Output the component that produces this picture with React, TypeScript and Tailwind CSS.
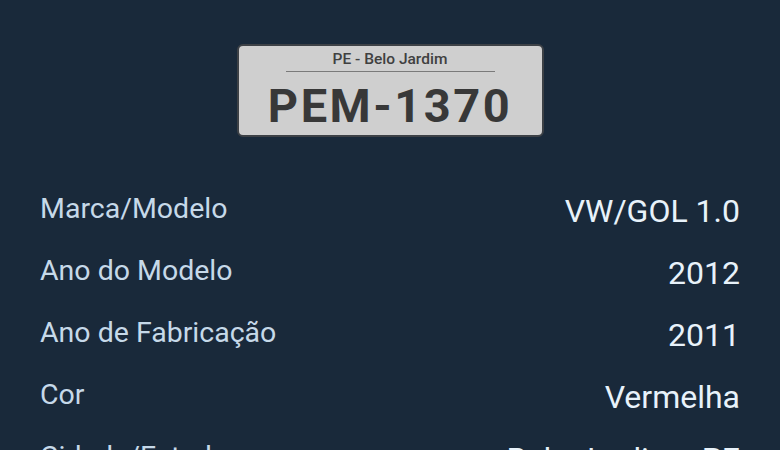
const rows: [string, string][] = [
  ["Marca/Modelo", "VW/GOL 1.0"],
  ["Ano do Modelo", "2012"],
  ["Ano de Fabricação", "2011"],
  ["Cor", "Vermelha"],
  ["Cidade/Estado", "Belo Jardim - PE"],
];

export default function App() {
  return (
    <div className="w-[780px] h-[450px] overflow-hidden bg-[#19293a] font-['Roboto',sans-serif]">
      <div className="flex justify-center pt-[44px]">
        <div className="w-[307px] rounded-[6px] border-2 border-[#3d4146] bg-[#cfcfcf] pt-[4px] pb-[1px] text-[#383838]">
          <div className="text-center text-[15.5px] font-medium leading-[18px] text-[#404040]">PE - Belo Jardim</div>
          <div className="mx-[47px] mt-[3px] h-px bg-[#7a7a7a]" />
          <div className="mt-[6px] whitespace-nowrap text-center text-[47px] font-bold leading-[56px] tracking-[2.5px]">
            PEM-1370
          </div>
        </div>
      </div>
      <div className="mt-[41px] px-[40px]">
        {rows.map(([label, value]) => (
          <div key={label} className="flex h-[62px] items-center justify-between">
            <span className="whitespace-nowrap text-[28.5px] text-[#c6d9e9]">{label}</span>
            <span className="mt-[3px] whitespace-nowrap text-[32px] text-[#e8f2fa]">{value}</span>
          </div>
        ))}
      </div>
    </div>
  );
}
